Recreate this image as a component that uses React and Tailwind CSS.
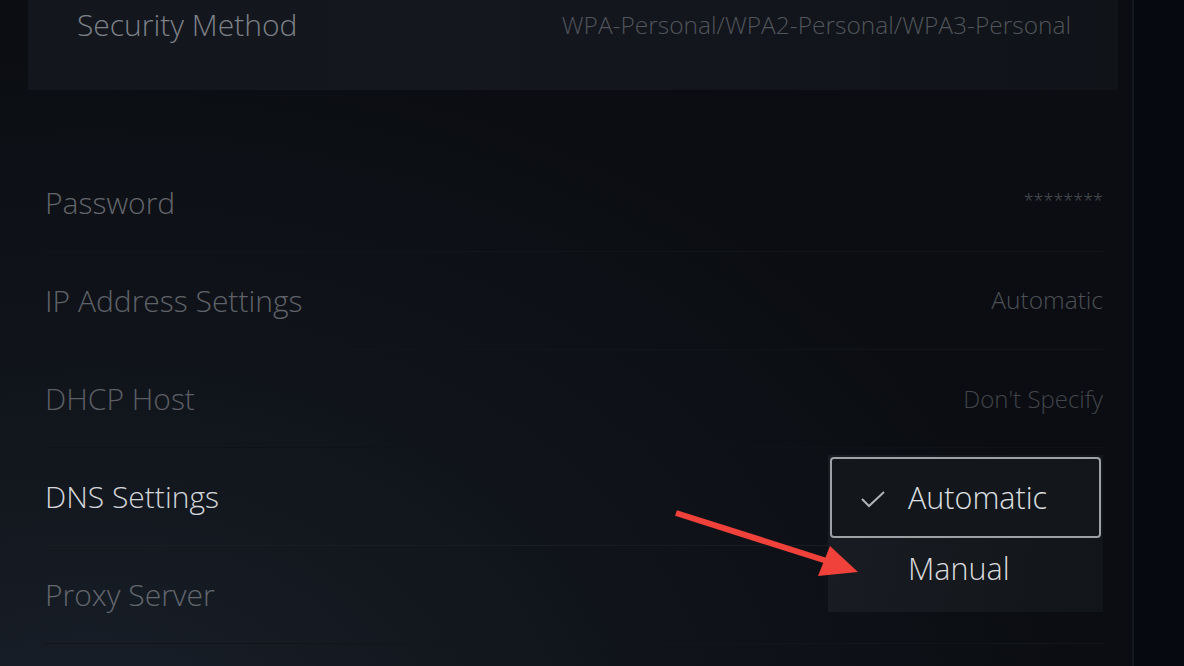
import React from "react";

const font = { fontFamily: '"Open Sans", "Noto Sans", sans-serif' };

function Row({ label, value, labelClass, valueClass, lineClass }) {
  return (
    <div className={"relative flex h-[98px] items-center justify-between border-b " + lineClass}>
      <span className={"text-[30px] font-light leading-none " + labelClass}>{label}</span>
      {value ? (
        <span className={"font-light leading-none " + valueClass}>{value}</span>
      ) : null}
    </div>
  );
}

export default function App() {
  return (
    <div
      className="relative flex h-[666px] w-[1184px] overflow-hidden bg-[#0b0d11]"
      style={font}
    >
      {/* main column */}
      <div className="relative h-full w-[1132px] bg-[radial-gradient(ellipse_at_8%_115%,#19202a_0%,#10141a_38%,#0b0d12_68%)]">
        {/* Security method panel */}
        <div className="ml-[28px] flex h-[90px] w-[1090px] items-start justify-between bg-[linear-gradient(90deg,#13161d_0%,#14171e_40%,#101318_100%)] pl-[49px] pr-[47px] pt-[8px]">
          <span className="text-[30px] font-light leading-[34px] text-[#7d8188]">
            Security Method
          </span>
          <span className="pt-[3px] text-[24.5px] font-light leading-[28px] text-[#50545b]">
            WPA-Personal/WPA2-Personal/WPA3-Personal
          </span>
        </div>

        {/* rows */}
        <div className="ml-[45px] mt-[64px] w-[1058px]">
          <Row
            label="Password"
            value="********"
            labelClass="text-[#63666c]"
            valueClass="-mt-[6px] text-[18px] text-[#54575c]"
            lineClass="border-[#111419]"
          />
          <Row
            label="IP Address Settings"
            value="Automatic"
            labelClass="text-[#5f6268]"
            valueClass="text-[24.5px] text-[#4d5056]"
            lineClass="border-[#111419]"
          />
          <Row
            label="DHCP Host"
            value="Don't Specify"
            labelClass="text-[#5b5e64]"
            valueClass="text-[24px] text-[#42454b]"
            lineClass="border-[#0f1217]"
          />
          <div className="relative flex h-[98px] items-center border-b border-[#191c21]">
            <span className="text-[30px] font-light leading-none text-[#d4d6d9]">
              DNS Settings
            </span>
            {/* dropdown */}
            <div className="absolute left-[783px] top-[7px] z-10 flex h-[157px] w-[275px] flex-col bg-[linear-gradient(100deg,#191c22_0%,#15181d_50%,#121519_100%)] p-[2px]">
              <div className="flex h-[81px] items-center rounded-[4px] border-2 border-[#9fa1a5] bg-[#13161b] pl-[28px]">
                <svg width="26" height="20" viewBox="0 0 26 20" className="mr-[22px] mt-[2px]">
                  <path
                    d="M2 10 L9 17 L24 3"
                    fill="none"
                    stroke="#b0b2b6"
                    strokeWidth="2"
                  />
                </svg>
                <span className="text-[30.5px] font-light leading-none text-[#dfe0e3]">
                  Automatic
                </span>
              </div>
              <div className="flex flex-1 items-center pb-[12px] pl-[78px]">
                <span className="text-[30.5px] font-light leading-none text-[#dadbde]">
                  Manual
                </span>
              </div>
            </div>
          </div>
          <Row
            label="Proxy Server"
            labelClass="text-[#63676e]"
            lineClass="border-[#12151a]"
          />
        </div>
      </div>

      {/* divider line */}
      <div className="h-full w-[2px] bg-[#16191e]" />

      {/* right strip */}
      <div className="h-full flex-1 bg-[#070910]" />

      {/* annotation arrow */}
      <svg
        className="pointer-events-none absolute left-0 top-0 z-20"
        width="1184"
        height="666"
        viewBox="0 0 1184 666"
      >
        <line
          x1="676"
          y1="513"
          x2="830"
          y2="562"
          stroke="#f0413b"
          strokeWidth="6"
          strokeLinecap="butt"
        />
        <polygon points="858,572 818,576 830,546" fill="#f0413b" />
      </svg>
    </div>
  );
}
